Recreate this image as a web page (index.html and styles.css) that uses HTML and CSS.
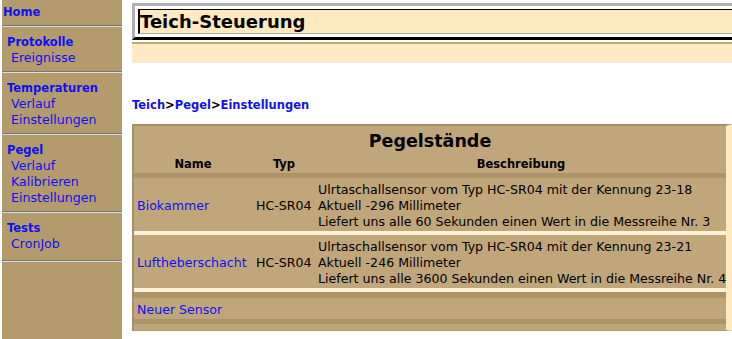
FILE: index.html
```html
<!doctype html>
<html lang="de">
<head>
    <meta charset="UTF-8">
    <title>Teich-Steuerung</title>
    <link rel="stylesheet" href="styles.css">
</head>
<body>
<div class="page">
    <div class="side">
        <div class="sect home"><a class="head" href="#">Home</a></div>
        <div class="sect">
            <a class="head" href="#">Protokolle</a>
            <a class="item" href="#">Ereignisse</a>
        </div>
        <div class="sect">
            <a class="head" href="#">Temperaturen</a>
            <a class="item" href="#">Verlauf</a>
            <a class="item" href="#">Einstellungen</a>
        </div>
        <div class="sect">
            <a class="head" href="#">Pegel</a>
            <a class="item" href="#">Verlauf</a>
            <a class="item" href="#">Kalibrieren</a>
            <a class="item" href="#">Einstellungen</a>
        </div>
        <div class="sect last">
            <a class="head" href="#">Tests</a>
            <a class="item" href="#">CronJob</a>
        </div>
    </div>

    <div class="main">
        <div class="banner"><h1>Teich-Steuerung</h1></div>
        <div class="subbar"></div>

        <p class="crumbs"><a href="#">Teich</a>&gt;<a href="#">Pegel</a>&gt;<a href="#">Einstellungen</a></p>

        <div class="panel">
            <h2>Pegelstände</h2>
            <table>
                <colgroup>
                    <col class="c-name">
                    <col class="c-typ">
                    <col>
                </colgroup>
                <thead>
                    <tr><th>Name</th><th>Typ</th><th>Beschreibung</th></tr>
                </thead>
                <tbody>
                    <tr class="sensor">
                        <td class="name"><a href="#">Biokammer</a></td>
                        <td class="typ">HC-SR04</td>
                        <td class="desc">Ulrtaschallsensor vom Typ HC-SR04 mit der Kennung 23-18<br>Aktuell -296 Millimeter<br>Liefert uns alle 60 Sekunden einen Wert in die Messreihe Nr. 3</td>
                    </tr>
                    <tr class="sensor">
                        <td class="name"><a href="#">Luftheberschacht</a></td>
                        <td class="typ">HC-SR04</td>
                        <td class="desc">Ulrtaschallsensor vom Typ HC-SR04 mit der Kennung 23-21<br>Aktuell -246 Millimeter<br>Liefert uns alle 3600 Sekunden einen Wert in die Messreihe Nr. 4</td>
                    </tr>
                    <tr class="new">
                        <td class="name" colspan="3"><a href="#">Neuer Sensor</a></td>
                    </tr>
                </tbody>
            </table>
        </div>
    </div>
</div>
</body>
</html>
```

FILE: styles.css
```css
body{margin:0; font-family:"DejaVu Sans", Verdana, sans-serif; font-size:12.6px; line-height:16px; color:#000; background:#fff;}
a{color:#1010f0; text-decoration:none;}

.page{display:flex; align-items:flex-start;}

/* linke Navigation */
.side{flex:none; width:120px; height:100vh; margin-left:2px; background:#b39b6e;}
.sect{padding:7px 0 5px; border-bottom:1px solid #767676; box-shadow:0 1px 0 #dcdcdc; margin-bottom:1px;}
.sect.home{padding-top:4px;}
.sect.last{padding-bottom:8px;}
.sect a{display:block;}
.sect .head{padding-left:5px; font-weight:bold; font-size:11.5px;}
.sect.home .head{padding-left:1px;}
.sect .item{padding-left:9px;}

/* Hauptbereich */
.main{flex:1; min-width:0; margin-left:10px;}

.banner{margin-top:3px; padding:3px 0 3px 3px; border-top:3px solid #b1b1b1; border-left:3px solid #b1b1b1; border-bottom:3px solid #000;}
.banner h1{margin:0; height:23px; padding-left:0; border-top:1px solid #000; border-left:2px solid #000; border-bottom:1px solid #a8a8a8; background:#ffe9c0; font-size:18px; line-height:24px;}

.subbar{margin-top:2px; height:18px; border-top:2px solid #c3a97f; border-bottom:1px solid #ececec; background:#ffe9c0;}

.crumbs{margin:34px 0 0; font-weight:bold; font-size:11.5px;}

.panel{margin-top:11px; padding-bottom:6px; border-top:2px solid #a98f62; border-left:2px solid #a98f62; border-right:6px solid #ffe9c0; border-bottom:1px solid #b29b70; background:#c0a77b;}
.panel h2{margin:0; padding-top:4px; font-size:17.5px; line-height:22px; text-align:center;}

.panel table{width:100%; table-layout:fixed; border-collapse:separate; border-spacing:0;}
.c-name{width:118px;}
.c-typ{width:64px;}
.panel th{padding:4px 0 1px; font-size:11.5px; border-bottom:5px solid #ad9468;}
.panel td{padding:4px 0 1px; vertical-align:middle; text-align:left;}
.panel td.name{padding-left:3px; white-space:nowrap;}
.panel td.typ{padding-left:4px; white-space:nowrap;}
.panel td.desc{padding-left:2px; white-space:nowrap;}
.sensor td{border-bottom:4px solid #fdf1d6;}
.new td{border-top:6px solid #ad9468; border-bottom:5px solid #ad9468;}
```
